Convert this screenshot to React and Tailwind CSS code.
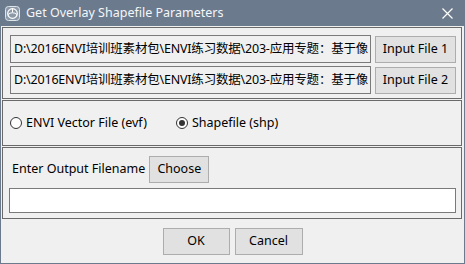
import React from "react";

const PATH = "D:\\2016ENVI培训班素材包\\ENVI练习数据\\203-应用专题：基于像";

function Field({ value }) {
  return (
    <div className="flex-1 min-w-0 h-[28px] border border-[#7a7a7a] bg-[#f0f0f0] flex items-center pl-[3px] overflow-hidden whitespace-nowrap text-[12.5px] tracking-[-0.2px] text-black">
      {value}
    </div>
  );
}

function Btn({ children, className = "" }) {
  return (
    <div className={"shrink-0 h-[27px] border border-[#adadad] bg-[#e1e1e1] flex items-center justify-center text-[12.5px] text-black " + className}>
      {children}
    </div>
  );
}

function Radio({ checked, label }) {
  return (
    <div className="flex items-center gap-[4px]">
      <div className="w-[12px] h-[12px] rounded-full border border-[#333] bg-white flex items-center justify-center">
        {checked && <div className="w-[6px] h-[6px] rounded-full bg-[#333]" />}
      </div>
      <span className="text-[12.5px] text-black">{label}</span>
    </div>
  );
}

export default function App() {
  return (
    <div
      className="w-[465px] h-[264px] bg-[#6b7a8d] flex flex-col"
      style={{ fontFamily: '"Noto Sans", "Noto Sans CJK SC", sans-serif' }}
    >
      <div className="h-[26px] flex items-center pl-[5px] pr-[12px] text-white">
        <svg width="15" height="15" viewBox="0 0 15 15" className="shrink-0">
          <rect x="0.5" y="0.5" width="14" height="14" rx="3" fill="#8c99a8" stroke="#dfe4ea" />
          <circle cx="7.5" cy="7.5" r="4.8" fill="none" stroke="#ffffff" strokeWidth="1.2" />
          <path d="M3 8.5 Q7.5 5 12 8.5" fill="none" stroke="#ffffff" strokeWidth="1" />
          <path d="M7.5 2.7 L7.5 6.5" stroke="#ffffff" strokeWidth="1" />
        </svg>
        <span className="ml-[6px] text-[12.5px] text-[#f4f6f8]">Get Overlay Shapefile Parameters</span>
        <div className="flex-1" />
        <svg width="11" height="11" viewBox="0 0 11 11">
          <path d="M0.5 0.5 L10.5 10.5 M10.5 0.5 L0.5 10.5" stroke="#ffffff" strokeWidth="1.2" />
        </svg>
      </div>
      <div className="flex-1 mx-[1px] mb-[1px] bg-[#f0f0f0] flex flex-col px-[1px] pt-[1px]">
        <div className="border border-[#6a6a6a] mr-[1px] flex flex-col gap-[3px] pt-[7px] pb-[4px] pl-[7px] pr-[5px]">
          <div className="flex gap-[4px] items-center">
            <Field value={PATH} />
            <Btn className="w-[81px]">Input File 1</Btn>
          </div>
          <div className="flex gap-[4px] items-center">
            <Field value={PATH} />
            <Btn className="w-[81px]">Input File 2</Btn>
          </div>
        </div>
        <div className="mt-[1px] mr-[1px] h-[46px] border border-[#6a6a6a] flex items-center pl-[7px] gap-[29px]">
          <Radio label="ENVI Vector File (evf)" />
          <Radio checked label="Shapefile (shp)" />
        </div>
        <div className="mt-[1px] mr-[1px] border border-[#6a6a6a] flex flex-col pt-[8px] pb-[5px] pl-[6px] pr-[5px]">
          <div className="flex items-center gap-[4px] pl-[3px]">
            <span className="text-[12.5px] text-black">Enter Output Filename</span>
            <Btn className="w-[60px]">Choose</Btn>
          </div>
          <div className="mt-[5px] h-[25px] border border-[#7a7a7a] bg-white" />
        </div>
        <div className="flex-1 flex items-center justify-center gap-[5px]">
          <Btn className="w-[67px]">OK</Btn>
          <Btn className="w-[68px]">Cancel</Btn>
        </div>
      </div>
    </div>
  );
}
